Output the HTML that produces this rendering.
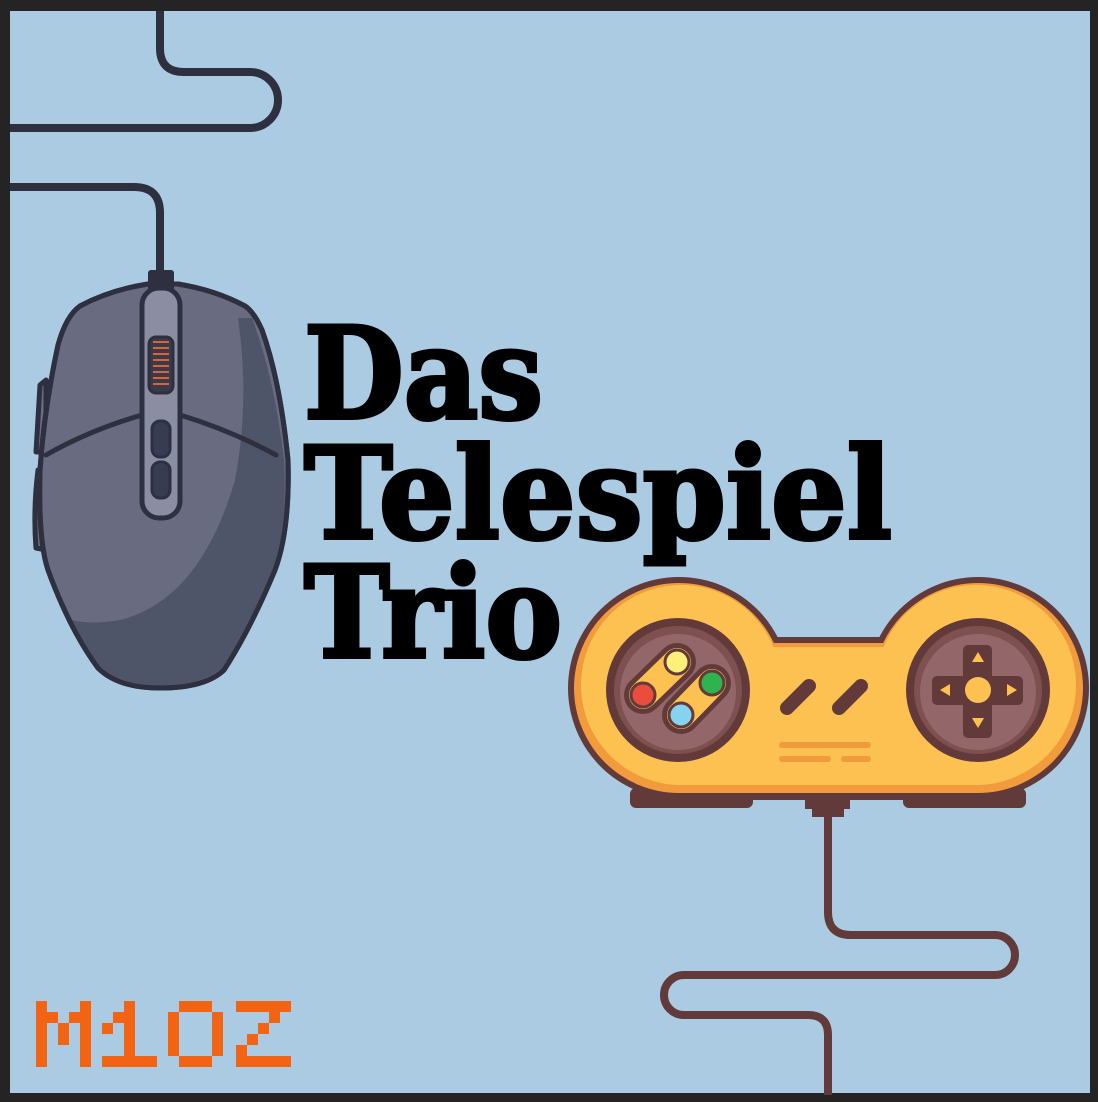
<!DOCTYPE html>
<html><head><meta charset="utf-8"><style>
html,body{margin:0;padding:0;background:#242424;}
svg{display:block}
</style></head><body>
<svg width="1098" height="1102" viewBox="0 0 1098 1102" xmlns="http://www.w3.org/2000/svg">
<rect x="0" y="0" width="1098" height="1102" fill="#242424"/>
<rect x="10" y="11" width="1080" height="1082" fill="#abcbe2"/>

<g fill="none" stroke="#2e3040" stroke-width="8" stroke-linecap="butt">
<path d="M160 11 V48 Q160 72 184 72 H250 A28 28 0 0 1 250 128 H10"/>
<path d="M10 187 H134 Q160 187 160 213 V275"/>
</g>

<path d="M828 805 V912 Q828 935 851 935 H995 A20 20 0 0 1 995 975 H684 A20 20 0 0 0 684 1015 H808 Q828 1015 828 1035 V1095" fill="none" stroke="#633a3a" stroke-width="8"/>

<!-- MOUSE -->
<g stroke="#2e3040" stroke-width="5" stroke-linejoin="round">
<path d="M40 385 L46 380 L46 452 L36 452 Z" fill="#6b6d82"/>
<path d="M38 470 L46 468 L46 550 L36 548 Q33 510 38 470 Z" fill="#6b6d82"/>
<path d="M148 284 Q110 290 80 306 Q66 316 58 345 Q44 410 40 470 Q38 540 48 570 Q70 630 98 668 Q118 688 160 688 Q205 688 224 670 Q250 630 275 570 Q290 530 288 460 Q280 380 262 330 Q254 312 245 306 Q215 290 178 284 Z" fill="#696b80"/>
</g>
<path d="M252 318 Q275 380 284 460 Q288 540 270 580 Q245 640 222 668 Q200 686 160 686 Q120 686 100 668 Q85 650 72 620 Q90 625 120 620 Q200 600 235 480 Q250 400 238 318 Z" fill="#4f5568"/>
<path d="M148 284 Q110 290 80 306 Q66 316 58 345 Q44 410 40 470 Q38 540 48 570 Q70 630 98 668 Q118 688 160 688 Q205 688 224 670 Q250 630 275 570 Q290 530 288 460 Q280 380 262 330 Q254 312 245 306 Q215 290 178 284 Z" fill="none" stroke="#2e3040" stroke-width="5"/>
<g fill="none" stroke="#2e3040" stroke-width="5" stroke-linecap="round">
<path d="M46 455 Q90 430 142 415"/>
<path d="M180 415 Q230 430 276 455"/>
</g>
<rect x="148" y="270" width="26" height="22" rx="3" fill="#2e3040"/>
<rect x="142" y="288" width="38" height="230" rx="17" fill="#8b8da2" stroke="#2e3040" stroke-width="5"/>
<rect x="149" y="337" width="24" height="56" rx="7" fill="#3a3a48" stroke="#2e3040" stroke-width="3"/>
<g stroke="#d8643a" stroke-width="2">
<line x1="153" y1="342" x2="169" y2="342"/><line x1="153" y1="348" x2="169" y2="348"/><line x1="153" y1="354" x2="169" y2="354"/><line x1="153" y1="360" x2="169" y2="360"/><line x1="153" y1="366" x2="169" y2="366"/><line x1="153" y1="372" x2="169" y2="372"/><line x1="153" y1="378" x2="169" y2="378"/><line x1="153" y1="384" x2="169" y2="384"/>
</g>
<rect x="152" y="421" width="18" height="36" rx="8" fill="#363d52" stroke="#2e3040" stroke-width="3"/>
<rect x="152" y="462" width="18" height="36" rx="8" fill="#363d52" stroke="#2e3040" stroke-width="3"/>

<!-- TEXT -->
<g font-family="'DejaVu Serif','Liberation Serif',serif" font-weight="bold" fill="#000" stroke="#000" stroke-width="4">
<text x="304" y="418" font-size="126" textLength="239" lengthAdjust="spacingAndGlyphs">Das</text>
<text x="304" y="538" font-size="126" textLength="588" lengthAdjust="spacingAndGlyphs">Telespiel</text>
<text x="304" y="657" font-size="126" textLength="258" lengthAdjust="spacingAndGlyphs">Trio</text>
</g>

<!-- CONTROLLER -->
<rect x="630" y="788" width="123" height="20" rx="6" fill="#633a3a"/>
<rect x="903" y="788" width="123" height="20" rx="6" fill="#633a3a"/>
<rect x="805" y="795" width="45" height="14" fill="#633a3a"/>
<rect x="812" y="805" width="32" height="12" fill="#633a3a"/>
<g fill="#633a3a">
<circle cx="679" cy="688" r="111"/>
<circle cx="978" cy="688" r="111"/>
<rect x="679" y="637" width="299" height="163"/>
</g>
<g fill="#f19b3c">
<circle cx="679" cy="688" r="105"/>
<circle cx="978" cy="688" r="105"/>
<rect x="679" y="643" width="299" height="150"/>
</g>
<g fill="#fdc152">
<circle cx="681" cy="685" r="100"/>
<circle cx="976" cy="685" r="100"/>
<rect x="679" y="647" width="299" height="138"/>
</g>
<circle cx="678" cy="690" r="72" fill="#633a3a"/>
<circle cx="678" cy="690" r="64" fill="#7e5050"/>
<circle cx="678" cy="692" r="58" fill="#93666a"/>
<g stroke-linecap="round">
<line x1="643" y1="695" x2="677" y2="662" stroke="#633a3a" stroke-width="38"/>
<line x1="681" y1="715" x2="712" y2="683" stroke="#633a3a" stroke-width="38"/>
<line x1="643" y1="695" x2="677" y2="662" stroke="#fdc152" stroke-width="28"/>
<line x1="681" y1="715" x2="712" y2="683" stroke="#fdc152" stroke-width="28"/>
</g>
<g stroke="#633a3a" stroke-width="3">
<circle cx="677" cy="662" r="12" fill="#fff07a"/>
<circle cx="643" cy="695" r="12" fill="#e84d3d"/>
<circle cx="712" cy="683" r="12" fill="#2fb34e"/>
<circle cx="681" cy="715" r="12" fill="#86d3f0"/>
</g>
<circle cx="978" cy="690" r="72" fill="#633a3a"/>
<circle cx="978" cy="690" r="64" fill="#7e5050"/>
<circle cx="978" cy="692" r="58" fill="#93666a"/>
<rect x="963" y="645" width="29" height="93" rx="5" fill="#633a3a"/>
<rect x="932" y="676" width="91" height="29" rx="5" fill="#633a3a"/>
<circle cx="978" cy="690" r="13" fill="#fdc152"/>
<g fill="#fdc152">
<polygon points="978,652 972,662 984,662"/>
<polygon points="978,728 972,718 984,718"/>
<polygon points="940,690 950,684 950,696"/>
<polygon points="1017,690 1007,684 1007,696"/>
</g>
<g stroke="#633a3a" stroke-width="14" stroke-linecap="round">
<line x1="787" y1="708" x2="809" y2="686"/>
<line x1="839" y1="708" x2="861" y2="686"/>
</g>
<g stroke="#f19b3c" stroke-width="6" stroke-linecap="round">
<line x1="782" y1="745" x2="868" y2="745"/>
<line x1="782" y1="759" x2="828" y2="759"/>
<line x1="844" y1="759" x2="868" y2="759"/>
</g>

<g fill="#f26314">
<rect x="36" y="1001" width="11" height="66"/>
<rect x="47" y="1012" width="11" height="11"/>
<rect x="58" y="1023" width="11" height="22"/>
<rect x="69" y="1012" width="11" height="11"/>
<rect x="80" y="1001" width="11" height="66"/>
<rect x="102" y="1023" width="11" height="11"/>
<rect x="113" y="1012" width="11" height="11"/>
<rect x="124" y="1001" width="11" height="66"/>
<rect x="102" y="1056" width="55" height="11"/>
<rect x="168" y="1012" width="11" height="44"/>
<rect x="179" y="1001" width="33" height="11"/>
<rect x="179" y="1056" width="33" height="11"/>
<rect x="212" y="1012" width="11" height="44"/>
<rect x="236" y="1001" width="55" height="11"/>
<rect x="269" y="1012" width="11" height="11"/>
<rect x="258" y="1023" width="11" height="11"/>
<rect x="247" y="1034" width="11" height="11"/>
<rect x="236" y="1045" width="11" height="11"/>
<rect x="236" y="1056" width="55" height="11"/>
</g>
</svg>
</body></html>
